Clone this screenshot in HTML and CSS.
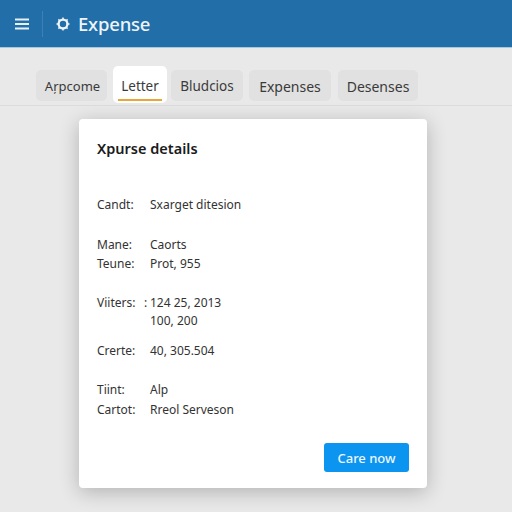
FILE: index.html
```html
<!DOCTYPE html>
<html lang="en">
<head>
<meta charset="utf-8">
<title>Expense</title>
<link rel="stylesheet" href="styles.css">
</head>
<body>
<header class="appbar">
  <svg class="menu-icon" width="14" height="12" viewBox="0 0 14 12" aria-hidden="true"><path d="M0 1.5h14M0 6h14M0 10.5h14" stroke="#e6f0f7" stroke-width="2"/></svg>
  <span class="divider"></span>
  <svg class="gear-icon" width="14" height="14" viewBox="0 0 14 14" aria-hidden="true"><circle cx="7" cy="7" r="4.4" fill="none" stroke="#f0f5fa" stroke-width="2.3"/><path d="M7 0.5v1.5M7 12v1.5M0.5 7h1.5M12 7h1.5M2.4 2.4l1.1 1.1M10.5 10.5l1.1 1.1M2.4 11.6l1.1-1.1M10.5 3.5l1.1-1.1" stroke="#f0f5fa" stroke-width="1.5"/></svg>
  <span class="brand">Expense</span>
</header>
<nav class="tabs">
  <span class="tab tab-a">Aŗpcome</span>
  <span class="tab tab-active">Letter</span>
  <span class="tab tab-b">Bludcios</span>
  <span class="tab tab-c">Expenses</span>
  <span class="tab tab-d">Desenses</span>
</nav>
<main class="card">
  <h1 class="title">Xpurse details</h1>
  <div class="rows">
    <div class="group g1"><div class="row"><span class="k">Candt:</span><span class="v">Sxarget ditesion</span></div></div>
    <div class="group g2">
      <div class="row"><span class="k">Mane:</span><span class="v">Caorts</span></div>
      <div class="row"><span class="k">Teune:</span><span class="v">Prot, 955</span></div>
    </div>
    <div class="group g3">
      <div class="row"><span class="k">Viiters:</span><span class="sep">:</span><span class="v">124 25, 2013</span></div>
      <div class="row"><span class="k"></span><span class="v">100, 200</span></div>
    </div>
    <div class="group g4"><div class="row"><span class="k">Crerte:</span><span class="v">40, 305.504</span></div></div>
    <div class="group g5">
      <div class="row"><span class="k">Tiint:</span><span class="v">Alp</span></div>
      <div class="row"><span class="k">Cartot:</span><span class="v">Rreol Serveson</span></div>
    </div>
  </div>
  <div class="actions"><button class="cta">Care now</button></div>
</main>
</body>
</html>
```
FILE: styles.css
```css
* { box-sizing: border-box; }
html, body { margin: 0; height: 100%; }
body {
  width: 512px;
  height: 512px;
  overflow: hidden;
  background: #e9e9e9;
  font-family: "Noto Sans", "Open Sans", "Liberation Sans", sans-serif;
  color: #222;
}
.appbar {
  height: 48px;
  background: #226ea8;
  border-bottom: 1px solid #a9c8de;
  display: flex;
  align-items: center;
  padding-left: 15px;
}
.menu-icon { flex: none; }
.divider { width: 1px; height: 26px; background: #3d80b3; margin-left: 13px; }
.gear-icon { margin-left: 13px; flex: none; }
.brand { margin-left: 8px; font-size: 18.5px; font-weight: 500; color: #eef4f9; letter-spacing: -0.2px; }
.tabs {
  height: 58px;
  border-bottom: 1px solid #dcdcdc;
  display: flex;
  align-items: flex-start;
  padding: 22px 0 0 36px;
}
.tab {
  height: 31px;
  padding-top: 1px;
  border-radius: 5px;
  background: #e1e1e1;
  display: flex;
  align-items: center;
  justify-content: center;
  font-size: 13.5px;
  color: #3a3a3a;
}
.tab-a { width: 71px; margin-right: 6px; font-size: 13px; padding-left: 2px; }
.tab-active {
  width: 54px; height: 37px; margin-top: -4px; margin-right: 4px;
  background: #fff;
  position: relative;
  padding-top: 3px;
}
.tab-active::after {
  content: "";
  position: absolute;
  left: 5px; right: 5px; bottom: 2px;
  height: 2px;
  background: #e9a73b;
}
.tab-b { width: 72px; margin-right: 6px; }
.tab-c { width: 82px; margin-right: 7px; font-size: 14px; }
.tab-d { width: 80px; font-size: 14px; }
.card {
  width: 348px;
  height: 369px;
  margin: 13px 0 0 79px;
  background: #fff;
  border-radius: 4px;
  box-shadow: 0 4px 20px rgba(0,0,0,.24);
  padding: 19px 18px 0;
  display: flex;
  flex-direction: column;
}
.title { margin: 0; font-size: 14.5px; line-height: 20px; font-weight: 600; color: #1b1b1b; }
.rows { font-size: 12px; color: #333; }
.row { display: flex; height: 18px; line-height: 18px; }
.k { width: 53px; flex: none; }
.sep { width: 0; margin-left: -6px; margin-right: 6px; flex: none; }
.g1 { margin-top: 38px; }
.g2 { margin-top: 22px; }
.g2 .row + .row { margin-top: 1px; }
.g3 { margin-top: 21px; }
.g4 { margin-top: 12px; }
.g5 { margin-top: 21px; }
.g5 .row + .row { margin-top: 2px; }
.actions { margin-top: auto; padding-bottom: 16px; display: flex; justify-content: flex-end; }
.cta {
  width: 85px; height: 29px;
  border: 0; border-radius: 3px;
  background: #0b94f0;
  color: #eef7fe;
  font: 500 13px "Noto Sans", "Liberation Sans", sans-serif;
}
```
